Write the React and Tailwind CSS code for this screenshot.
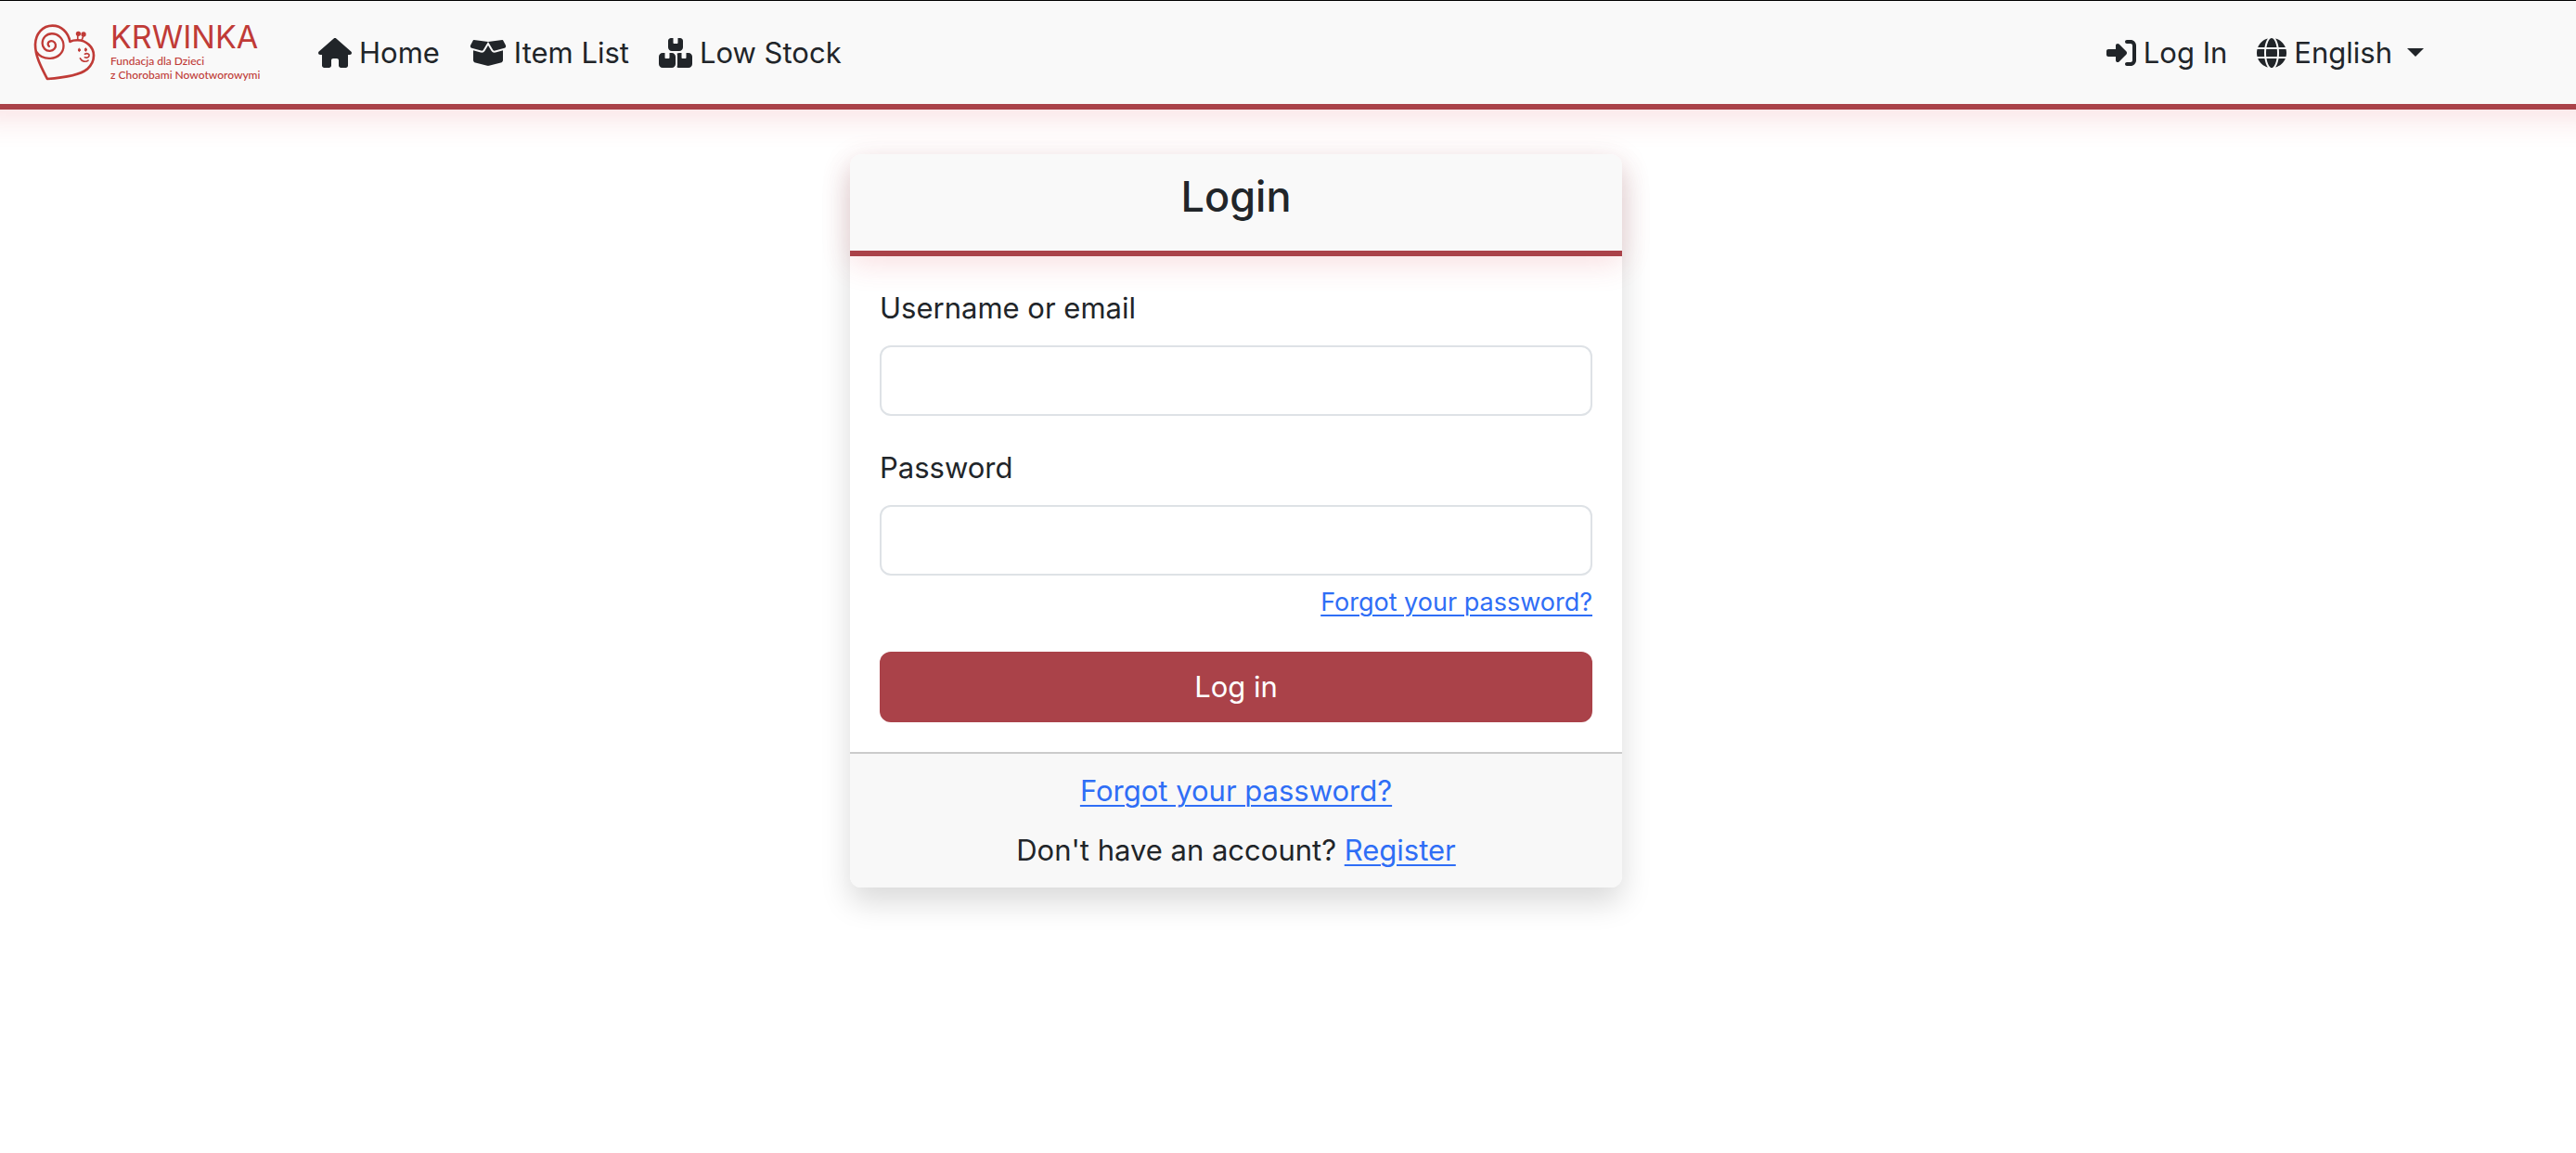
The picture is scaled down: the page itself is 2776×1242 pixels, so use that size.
import { FaHouse, FaBoxOpen, FaBoxesStacked, FaRightToBracket, FaGlobe } from "react-icons/fa6";

function SnailMark() {
  return (
    <svg
      viewBox="48 76 200 184"
      className="h-[61px] w-[67px] shrink-0"
      fill="none"
      stroke="currentColor"
      strokeWidth="8"
      strokeLinecap="round"
      strokeLinejoin="round"
      aria-hidden="true"
    >
      <path d="M166 133 C160 102 138 81 109 81 C77 81 54 107 53 142 C53 180 72 215 92 254 C150 250 196 243 222 222 C237 209 243 195 243 178 C243 150 218 128 190 128 C181 128 173 129 166 133 Z" />
      <path d="M57 166 C67 181 84 188 102 187 C128 186 145 168 145 146 C145 124 128 107 107 107 C89 107 76 121 76 138 C76 153 87 164 101 163 C113 162 121 152 119 142 C117 132 106 128 98 133 C93 137 93 144 98 148" strokeWidth="7" />
      <path d="M191 128 V109 M204 129 L210 112" strokeWidth="5" />
      <circle cx="193" cy="107" r="4" fill="currentColor" />
      <circle cx="210" cy="109" r="4" fill="currentColor" />
      <ellipse cx="196" cy="160" rx="3" ry="5" fill="currentColor" strokeWidth="3" />
      <ellipse cx="217" cy="159" rx="3" ry="5" fill="currentColor" strokeWidth="3" />
      <path d="M214 173 C222 169 230 173 228 179 C226 185 219 186 214 184" strokeWidth="5" />
      <path d="M199 187 C204 198 218 200 225 194" strokeWidth="5" />
    </svg>
  );
}

function NavLink({ icon, children }) {
  return (
    <a href="#" className="flex items-center gap-2 px-4">
      {icon}
      <span>{children}</span>
    </a>
  );
}

function Field({ id, label, type }) {
  return (
    <div>
      <label htmlFor={id} className="mb-4 block">{label}</label>
      <input
        id={id}
        type={type}
        className="block h-[76px] w-full rounded-xl border-2 border-[#dee2e6] bg-white px-6 outline-none"
      />
    </div>
  );
}

const linkStyle = "text-[#2f6ef6] underline decoration-2 underline-offset-4";

export default function App() {
  return (
    <div className="min-h-screen overflow-x-clip bg-white font-[Inter,sans-serif] text-[31px] leading-[48px] text-[#212529]">
      <header className="-mx-8 border-t border-b-6 border-t-black border-b-[#aa4249] bg-[#f9f9f9] pr-36 pl-8 shadow-[0_8px_32px_rgba(220,53,69,0.16)]">
        <nav className="mx-auto flex h-[111px] max-w-[2640px] items-center px-6">
          <a href="#" className="mr-8 flex w-[259px] shrink-0 items-center gap-4 text-[#c03b37]">
            <SnailMark />
            <span className="flex flex-col whitespace-nowrap">
              <span className="text-[34px] leading-[28px]">KRWINKA</span>
              <span className="pt-1 font-[Lato,sans-serif] text-[12px] leading-[15px] font-medium">
                Fundacja dla Dzieci
                <br />z Chorobami Nowotworowymi
              </span>
            </span>
          </a>
          <NavLink icon={<FaHouse className="h-8 w-9" />}>Home</NavLink>
          <NavLink icon={<FaBoxOpen className="h-8 w-10" />}>Item List</NavLink>
          <NavLink icon={<FaBoxesStacked className="h-8 w-9" />}>Low Stock</NavLink>
          <div className="ml-auto flex items-center">
            <NavLink icon={<FaRightToBracket className="size-8" />}>Log In</NavLink>
            <div className="flex items-center gap-2 px-4">
              <FaGlobe className="size-8" />
              <select aria-label="Language" className="field-sizing-content appearance-none bg-transparent outline-none">
                <option>English</option>
              </select>
              <svg viewBox="0 0 18 9" className="ml-2 h-[9px] w-[18px]" fill="currentColor" aria-hidden="true">
                <path d="M0 0H18L9 9Z" />
              </svg>
            </div>
          </div>
        </nav>
      </header>

      <main className="pt-12 pr-28">
        <div className="mx-auto flex max-w-[2640px] justify-center">
          <div className="w-1/3 px-6">
            <section className="rounded-xl bg-white shadow-[0_16px_32px_rgba(0,0,0,0.15)]">
              <div className="rounded-t-xl border-b-6 border-[#aa4249] bg-[#f9f9f9] px-8 pt-4 pb-7 text-center shadow-[0_8px_32px_rgba(220,53,69,0.16)]">
                <h1 className="text-[45px] leading-[60px] font-medium">Login</h1>
              </div>
              <form className="flex flex-col gap-8 p-8" onSubmit={(e) => e.preventDefault()}>
                <Field id="username" label="Username or email" type="text" />
                <div>
                  <Field id="password" label="Password" type="password" />
                  <div className="pt-2 text-right text-[27px] leading-[42px]">
                    <a href="#" className={linkStyle}>Forgot your password?</a>
                  </div>
                </div>
                <button type="submit" className="h-[76px] rounded-xl bg-[#aa4249] text-white">Log in</button>
              </form>
              <div className="flex flex-col gap-4 rounded-b-xl border-t-2 border-[#cbcbcb] bg-[#f8f8f8] px-8 py-4 text-center">
                <p><a href="#" className={linkStyle}>Forgot your password?</a></p>
                <p>Don't have an account? <a href="#" className={linkStyle}>Register</a></p>
              </div>
            </section>
          </div>
        </div>
      </main>
    </div>
  );
}
